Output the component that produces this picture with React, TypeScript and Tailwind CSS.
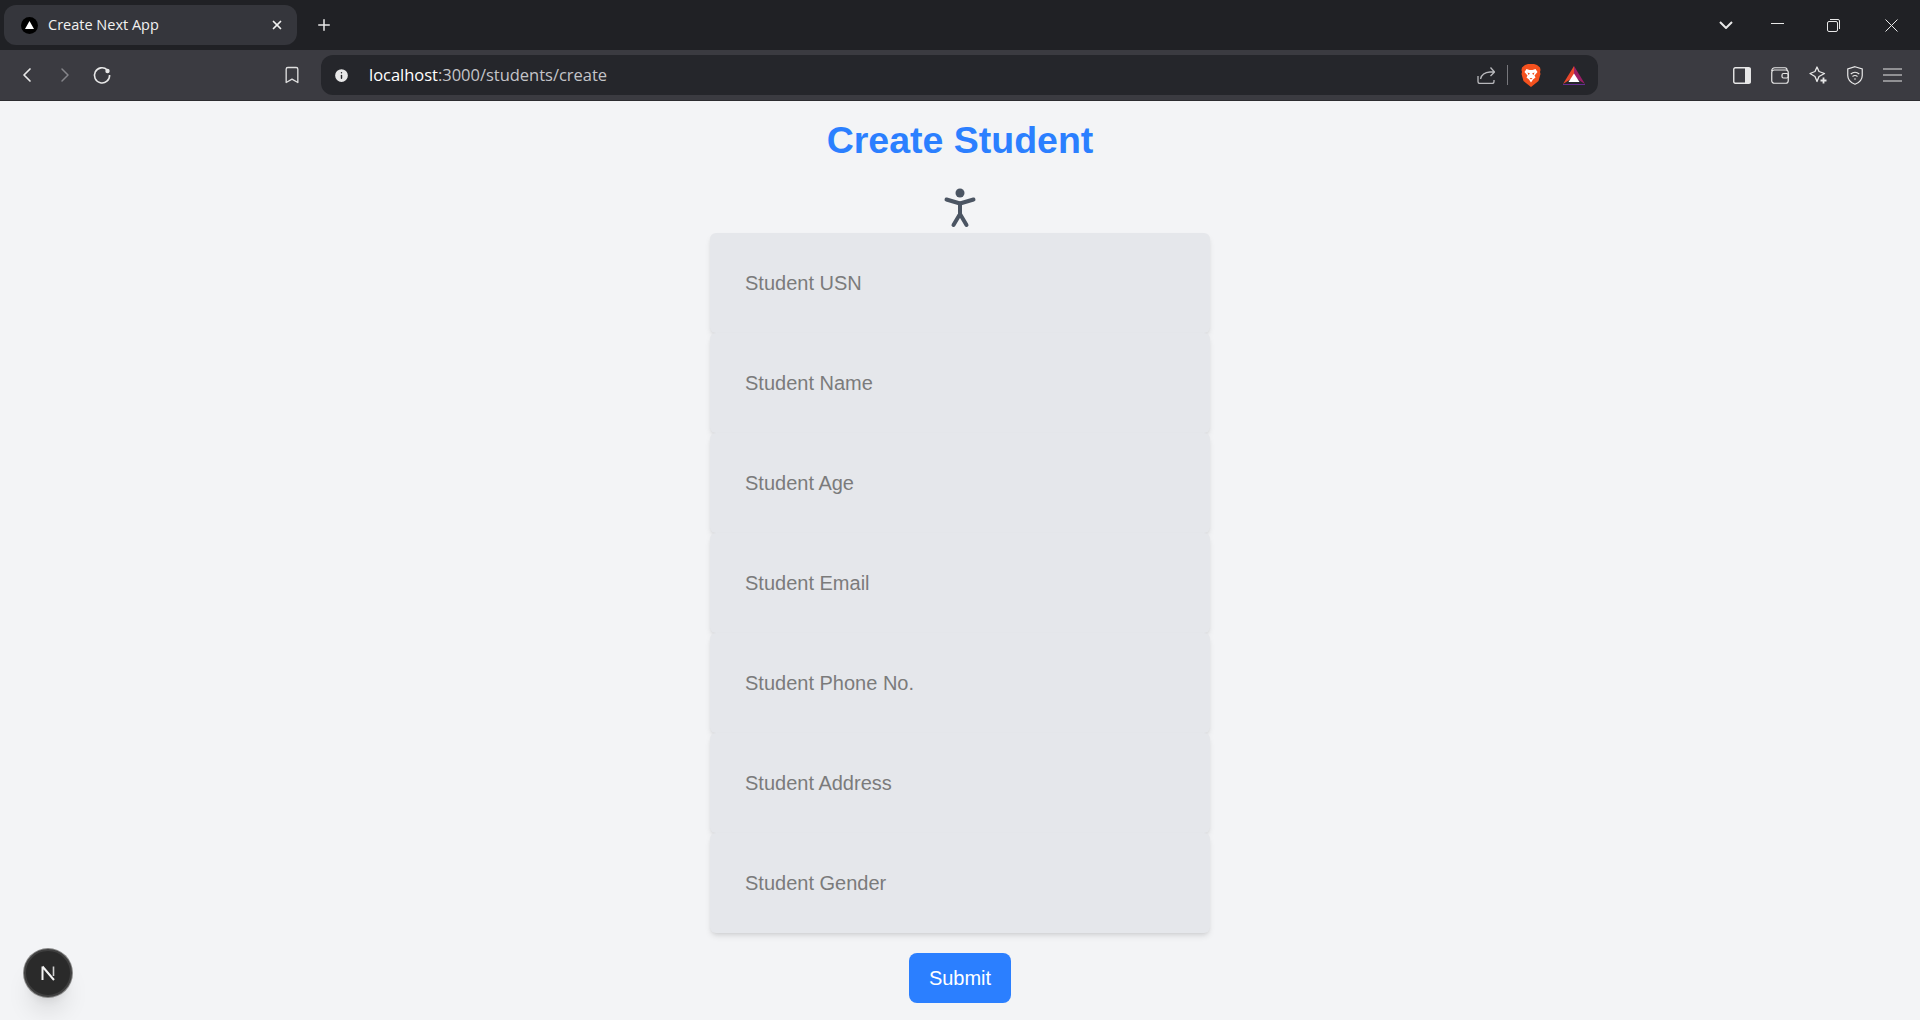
import { ChevronLeft, ChevronRight, Info, Plus, X, Bookmark } from 'lucide-react'

const fields = [
  'Student USN',
  'Student Name',
  'Student Age',
  'Student Email',
  'Student Phone No.',
  'Student Address',
  'Student Gender',
]

function BraveLogo() {
  return (
    <svg width="20" height="23" viewBox="0 0 20 23">
      <path d="M4 1 L7 0 H13 L16 1 L19 3.5 L19.5 6 L19 8 L19.5 10 L17.5 17 L10 23 L2.5 17 L0.5 10 L1 8 L0.5 6 L1 3.5 Z" fill="#f4511e" />
      <path d="M5.5 5 L8.5 6 H11.5 L14.5 5 L16.5 8 L13.5 11.5 L14.5 13.5 L12 15.5 L10 18.5 L8 15.5 L5.5 13.5 L6.5 11.5 L3.5 8 Z" fill="#fff" />
      <path d="M6.5 8.5 L9 9.5 L7.5 11 Z M13.5 8.5 L11 9.5 L12.5 11 Z M8.5 14 H11.5 L10 15.5 Z" fill="#f4511e" />
    </svg>
  )
}

function BatLogo() {
  return (
    <svg width="22" height="19" viewBox="0 0 22 19">
      <polygon points="11,0 0,18 11,11" fill="#e8472b" />
      <polygon points="11,0 22,18 11,11" fill="#9b1f66" />
      <polygon points="0,18 22,18 22,19 0,19" fill="#662d91" />
      <polygon points="11,7.5 5.5,16 16.5,16" fill="#fff" />
    </svg>
  )
}

function Browser() {
  return (
    <div className="shrink-0 font-['Open_Sans',sans-serif] text-white">
      <div className="h-[50px] bg-[#202125] flex items-center pl-1">
        <div className="w-[293px] h-10 rounded-xl bg-[#35363c] flex items-center pl-[17px] pr-[13px]">
          <span className="w-[17px] h-[17px] rounded-full bg-black flex items-center justify-center">
            <svg width="9" height="8" viewBox="0 0 9 8">
              <polygon points="4.5,0 9,8 0,8" fill="#fff" />
            </svg>
          </span>
          <span className="ml-[10px] text-[14.5px] text-[#f1f1f1] flex-1">Create Next App</span>
          <X size={14} strokeWidth={3} className="text-[#f1f1f1]" />
        </div>
        <Plus size={18} strokeWidth={2} className="ml-[18px] text-[#e8e8e8]" />
        <div className="flex-1" />
        <svg width="14" height="8" viewBox="0 0 14 8" fill="none" stroke="#e8e8e8" strokeWidth="2">
          <path d="M1 1 L7 7 L13 1" />
        </svg>
        <div className="ml-[38px] w-[13px] h-px bg-[#e8e8e8] -mt-[4px]" />
        <svg width="13" height="13" viewBox="0 0 13 13" fill="none" stroke="#e8e8e8" strokeWidth="1" className="ml-[43px]">
          <rect x="0.5" y="2.5" width="10" height="10" rx="1.5" />
          <path d="M3 0.5 H11 A1.5 1.5 0 0 1 12.5 2 V10" />
        </svg>
        <svg width="13" height="13" viewBox="0 0 13 13" fill="none" stroke="#e8e8e8" strokeWidth="1" className="ml-[45px] mr-[22px]">
          <path d="M0.5 0.5 L12.5 12.5 M12.5 0.5 L0.5 12.5" />
        </svg>
      </div>
      <div className="h-[51px] bg-[#3b3b41] border-b border-[#2c2c30] flex items-center pl-[15px]">
        <ChevronLeft size={24} strokeWidth={1.7} className="text-[#e8e8e8]" />
        <ChevronRight size={24} strokeWidth={1.5} className="text-[#85858a] ml-[14px]" />
        <svg width="20" height="20" viewBox="0 0 20 20" fill="none" stroke="#e8e8e8" strokeWidth="1.6" className="ml-[15px]">
          <path d="M15.2 4.8 A7.6 7.6 0 1 0 17.6 10" />
          <circle cx="15.5" cy="6" r="2.2" fill="#e8e8e8" stroke="none" />
        </svg>
        <Bookmark size={20} strokeWidth={1.6} className="text-[#e0e0e0] ml-[170px]" />
        <div className="w-[1277px] h-10 rounded-xl bg-[#25262b] ml-[19px] flex items-center pl-3 pr-[13px]">
          <Info size={17} fill="#e8e8e8" className="text-[#25262b]" />
          <span className="ml-[19px] text-[16.5px] tracking-[-0.02px] flex-1">
            <span className="text-white">localhost</span>
            <span className="text-[#c4c4c8]">:3000/students/create</span>
          </span>
          <svg width="18" height="18" viewBox="0 0 18 18" fill="none" stroke="#b8b8bc" strokeWidth="1.3">
            <path d="M1 10 V15.5 Q1 17.5 3 17.5 H15 Q17 17.5 17 15.5 V14" />
            <path d="M3.5 13 Q5 6.5 13 6 H17 M13.5 1.5 L17.5 6 L13.5 10" />
          </svg>
          <div className="w-px h-5 bg-[#77777c] ml-3 mr-[13px]" />
          <BraveLogo />
          <div className="ml-[22px]"><BatLogo /></div>
        </div>
        <div className="flex items-center ml-[135px] gap-5">
          <svg width="18" height="17" viewBox="0 0 18 17" fill="none">
            <rect x="0.75" y="0.75" width="16.5" height="15.5" rx="1.5" stroke="#e8e8e8" strokeWidth="1.4" />
            <rect x="12" y="1" width="5.5" height="15" fill="#e8e8e8" />
          </svg>
          <svg width="18" height="17" viewBox="0 0 18 17" fill="none" stroke="#e8e8e8" strokeWidth="1.2">
            <path d="M0.75 4 Q0.75 0.75 4 0.75 H14 Q16 0.75 16 3" />
            <rect x="0.75" y="3" width="16.5" height="13.25" rx="2.5" />
            <rect x="11" y="6.5" width="6.25" height="4.5" rx="1.5" />
          </svg>
          <svg width="18" height="18" viewBox="0 0 18 18" fill="none" stroke="#e8e8e8" strokeWidth="1.3">
            <path d="M8 1 L10 5.5 L15.5 7.5 L10 10.5 L8 15.5 L6 10.5 L1 7.5 L6 5.5 Z" strokeLinejoin="round" />
            <path d="M14.5 11.5 V17.5 M11.5 14.5 H17.5" strokeWidth="1.8" />
          </svg>
          <svg width="16" height="19" viewBox="0 0 16 19" fill="none" stroke="#e8e8e8" strokeWidth="1.2">
            <path d="M8 0.75 L15.25 3 V9.5 Q15.25 15.5 8 18.25 Q0.75 15.5 0.75 9.5 V3 Z" />
            <path d="M3.75 8 Q8 4.5 12.25 8 M5.5 10.5 Q8 8.5 10.5 10.5" />
            <circle cx="8" cy="13" r="0.8" fill="#e8e8e8" stroke="none" />
          </svg>
          <svg width="19" height="14" viewBox="0 0 19 14" fill="none" stroke="#e8e8e8" strokeWidth="1.2">
            <path d="M0 1 H19 M0 7 H19 M0 13 H19" />
          </svg>
        </div>
      </div>
    </div>
  )
}

export default function App() {
  return (
    <div className="relative h-screen overflow-hidden flex flex-col bg-gray-100 font-['Liberation_Sans',Arial,sans-serif]">
      <Browser />
      <main className="flex flex-col items-center pt-[19px]">
        <h1 className="text-[37.5px] leading-10 font-bold text-blue-500">Create Student</h1>
        <svg width="48" height="48" viewBox="0 0 48 48" fill="none" stroke="#4b5563" strokeWidth="4" strokeLinecap="round" strokeLinejoin="round" className="mt-[25px]">
          <circle cx="24" cy="8" r="4.5" fill="#4b5563" stroke="none" />
          <path d="M10.5 14.5 L24 18.5 L37.5 14.5" />
          <path d="M24 18.5 V29 L17.5 40 M24 29 L30.5 40" />
        </svg>
        <form className="w-[500px] flex flex-col items-center">
          {fields.map((f) => (
            <input
              key={f}
              placeholder={f}
              className="w-full h-[100px] px-[35px] text-xl bg-gray-200 rounded-md shadow-md outline-none placeholder:text-[#7b7b7b]"
            />
          ))}
          <button type="button" className="mt-5 h-[50px] w-[102px] bg-blue-500 text-white text-xl rounded-lg">
            Submit
          </button>
        </form>
      </main>
      <div className="absolute left-6 bottom-[23px] w-12 h-12 rounded-full bg-[#2a2a2a] border-2 border-[#3f3f3f] ring-1 ring-[#888] shadow-xl flex items-center justify-center">
        <svg width="16" height="16" viewBox="0 0 16 16" fill="none">
          <path d="M2.5 15 V1.5 M2.5 1.5 L14 15" stroke="#f4f4f4" strokeWidth="2" />
          <path d="M13.5 1.5 V11" stroke="#cfcfcf" strokeWidth="1.6" />
        </svg>
      </div>
    </div>
  )
}
